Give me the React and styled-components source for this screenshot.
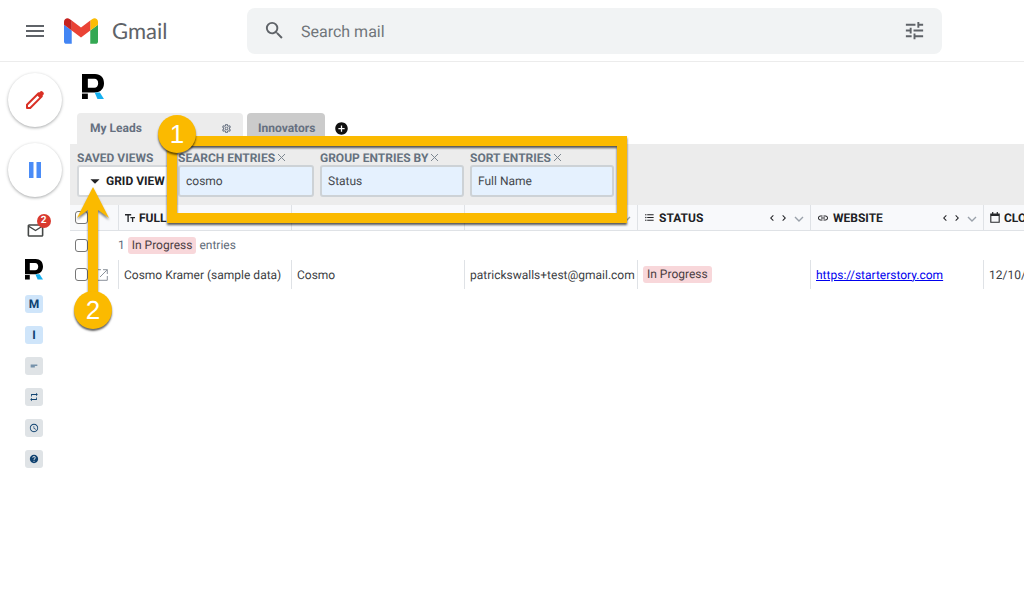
import React, { useState } from 'react';
import styled, { createGlobalStyle } from 'styled-components';
import {
  MdAccessTime,
  MdAddCircle,
  MdArrowDropDown,
  MdChevronLeft,
  MdChevronRight,
  MdFormatListBulleted,
  MdHelp,
  MdLink,
  MdMailOutline,
  MdMenu,
  MdOutlineSettings,
  MdRepeat,
  MdSearch,
  MdShortText,
  MdTune,
} from 'react-icons/md';

const columns = [
  { name: 'FULL NAME', icon: 'text' },
  { name: 'FIRST', icon: 'text' },
  { name: 'EMAIL', icon: 'text' },
  { name: 'STATUS', icon: 'list' },
  { name: 'WEBSITE', icon: 'link' },
  { name: 'CLOSE', icon: 'date' },
];

function BrandLogo({ width }) {
  return (
    <svg width={width} viewBox="0 0 64 73" role="img" aria-label="R">
      <path
        fill="#000"
        fillRule="evenodd"
        d="M0 0H38C54 0 64 10 64 27C64 43 54 53 38 54H0ZM17 14V40H36C43 40 47 35 47 27C47 19 43 14 36 14Z"
      />
      <path fill="#000" d="M0 57H17V73H0Z" />
      <path fill="#15b0f0" d="M37 54H52L64 73H45Z" />
    </svg>
  );
}

function GmailLogo() {
  return (
    <svg width="34" height="26" viewBox="52 42 88 66" aria-hidden="true">
      <path fill="#4285f4" d="M58 108h14V74L52 59v43c0 3.32 2.69 6 6 6" />
      <path fill="#34a853" d="M120 108h14c3.32 0 6-2.69 6-6V59l-20 15" />
      <path fill="#fbbc04" d="M120 48v26l20-15v-8c0-7.42-8.47-11.65-14.4-7.2" />
      <path fill="#ea4335" d="M72 74V48l24 18 24-18v26L96 92" />
      <path fill="#c5221f" d="M52 51v8l20 15V48l-5.6-4.2c-5.94-4.45-14.4-.22-14.4 7.2" />
    </svg>
  );
}

function PencilIcon() {
  return (
    <svg width="20" height="20" viewBox="0 0 20 20" fill="none" aria-hidden="true">
      <path
        d="M2 18V14.8L13.6 3.2L16.8 6.4L5.2 18Z"
        stroke="#d93025"
        strokeWidth="2"
        strokeLinejoin="round"
      />
      <path
        d="M11.8 5L15 1.8C15.9.9 16.9.9 17.7 1.7L18.3 2.3C19.1 3.1 19.1 4.1 18.2 5L15 8.2Z"
        fill="#d93025"
      />
    </svg>
  );
}

function OpenIcon() {
  return (
    <svg width="12" height="12" viewBox="0 0 12 12" fill="none" stroke="#8b929b" aria-hidden="true">
      <path d="M5 .7H.7V11.3H11.3V7M7 .7H11.3V5M11.3.7L4 8" />
    </svg>
  );
}

function CloseIcon() {
  return (
    <svg width="9" height="9" viewBox="0 0 9 9" fill="none" stroke="#7d8790" aria-hidden="true">
      <path d="M1 1L8 8M8 1L1 8" />
    </svg>
  );
}

function TextTypeIcon() {
  return (
    <svg width="10" height="10" viewBox="0 0 10 10" fill="none" stroke="#26282c" aria-hidden="true">
      <path strokeWidth="1.4" d="M0 1.7H6.2M3.1 1.7V9" />
      <path strokeWidth="1.3" d="M5.4 4.6H10M7.6 4.6V9" />
    </svg>
  );
}

function DateIcon() {
  return (
    <svg width="10" height="11" viewBox="0 0 10 11" fill="none" stroke="#26282c" aria-hidden="true">
      <path d="M.8 2H9.2V10.2H.8Z" strokeWidth="1.1" />
      <path d="M.8 3H9.2" strokeWidth="2" />
      <path d="M2.7 0V2M7.3 0V2" strokeWidth="1.2" />
    </svg>
  );
}

function ColumnIcon({ type }) {
  if (type === 'list') return <MdFormatListBulleted size={11} />;
  if (type === 'link') return <MdLink size={12} />;
  if (type === 'date') return <DateIcon />;
  return <TextTypeIcon />;
}

function App() {
  const [search, setSearch] = useState('cosmo');
  const [group, setGroup] = useState('Status');
  const [sort, setSort] = useState('Full Name');

  return (
    <>
      <GlobalStyle />
      <Header>
        <HeaderBrand>
          <IconButton aria-label="Main menu">
            <MdMenu size={24} />
          </IconButton>
          <GmailLogo />
          <span>Gmail</span>
        </HeaderBrand>
        <MailSearch>
          <IconButton aria-label="Search">
            <MdSearch size={23} />
          </IconButton>
          <input type="text" placeholder="Search mail" aria-label="Search mail" />
          <IconButton aria-label="Search options">
            <MdTune size={23} />
          </IconButton>
        </MailSearch>
      </Header>
      <Body>
        <Sidebar>
          <RoundButton aria-label="Compose">
            <PencilIcon />
          </RoundButton>
          <RoundButton aria-label="Pause inbox">
            <svg width="14" height="16" viewBox="0 0 14 16" fill="#4a8cf7" aria-hidden="true">
              <path d="M1 0H5.5V16H1ZM8.5 0H13V16H8.5Z" />
            </svg>
          </RoundButton>
          <Inbox href="#inbox" aria-label="Inbox">
            <MdMailOutline size={19} />
            <Badge>2</Badge>
          </Inbox>
          <Shortcuts>
            <BrandLogo width={18} />
            <Shortcut $box>M</Shortcut>
            <Shortcut $box>I</Shortcut>
            <Shortcut aria-label="Snippets">
              <MdShortText size={10} />
            </Shortcut>
            <Shortcut aria-label="Sequences">
              <MdRepeat size={10} />
            </Shortcut>
            <Shortcut aria-label="Reminders">
              <MdAccessTime size={10} />
            </Shortcut>
            <Shortcut aria-label="Help">
              <MdHelp size={10} />
            </Shortcut>
          </Shortcuts>
        </Sidebar>
        <Main>
          <BrandBar>
            <BrandLogo width={22} />
          </BrandBar>
          <Tabs>
            <Tab $active>
              My Leads
              <MdOutlineSettings size={11} stroke="currentColor" />
            </Tab>
            <Tab>Innovators</Tab>
            <AddButton aria-label="Add box">
              <MdAddCircle size={15} />
            </AddButton>
          </Tabs>
          <Toolbar>
            <Field $width={95}>
              <FieldLabel>
                <span id="views">SAVED VIEWS</span>
              </FieldLabel>
              <ViewButton aria-describedby="views">
                <MdArrowDropDown size={22} />
                GRID VIEW
              </ViewButton>
            </Field>
            <Field $width={136}>
              <FieldLabel>
                <label htmlFor="search">SEARCH ENTRIES</label>
                <button aria-label="Clear search" onClick={() => setSearch('')}>
                  <CloseIcon />
                </button>
              </FieldLabel>
              <input id="search" value={search} onChange={(e) => setSearch(e.target.value)} />
            </Field>
            <Field $width={144}>
              <FieldLabel>
                <label htmlFor="group">GROUP ENTRIES BY</label>
                <button aria-label="Clear grouping">
                  <CloseIcon />
                </button>
              </FieldLabel>
              <select id="group" value={group} onChange={(e) => setGroup(e.target.value)}>
                <option>Status</option>
              </select>
            </Field>
            <Field $width={144}>
              <FieldLabel>
                <label htmlFor="sort">SORT ENTRIES</label>
                <button aria-label="Clear sorting">
                  <CloseIcon />
                </button>
              </FieldLabel>
              <select id="sort" value={sort} onChange={(e) => setSort(e.target.value)}>
                <option>Full Name</option>
              </select>
            </Field>
          </Toolbar>
          <TableWrap>
            <Table>
              <colgroup>
                <col className="tools" />
                {columns.map((column) => (
                  <col key={column.name} />
                ))}
              </colgroup>
              <thead>
                <tr>
                  <td>
                    <Checkbox aria-label="Select all" />
                  </td>
                  {columns.map((column) => (
                    <th key={column.name}>
                      <HeadCell>
                        <ColumnIcon type={column.icon} />
                        <span>{column.name}</span>
                        <MdChevronLeft size={12} />
                        <MdChevronRight size={12} />
                        <svg width="10" height="10" viewBox="0 0 10 10" fill="none" stroke="#9aa1aa">
                          <path strokeWidth="1.4" d="M1 4L5 8L9 4" />
                        </svg>
                      </HeadCell>
                    </th>
                  ))}
                </tr>
              </thead>
              <tbody>
                <GroupRow>
                  <td>
                    <Checkbox aria-label="Select group" />
                  </td>
                  <td colSpan={columns.length}>
                    1 <Pill>In Progress</Pill> entries
                  </td>
                </GroupRow>
                <tr>
                  <td>
                    <RowTools>
                      <Checkbox aria-label="Select Cosmo Kramer" />
                      <OpenIcon />
                    </RowTools>
                  </td>
                  <td>Cosmo Kramer (sample data)</td>
                  <td>Cosmo</td>
                  <td>patrickswalls+test@gmail.com</td>
                  <td>
                    <Pill>In Progress</Pill>
                  </td>
                  <td>
                    <a href="https://starterstory.com">https://starterstory.com</a>
                  </td>
                  <td>12/10/20</td>
                </tr>
              </tbody>
            </Table>
          </TableWrap>
          <Highlight />
          <Arrow width="40" height="120" viewBox="0 0 40 120" aria-hidden="true">
            <path d="M20 1L36 32L25 24V110H15V24L4 32Z" fill="#fbba00" />
          </Arrow>
          <Step $left={88} $top={53}>
            1
          </Step>
          <Step $left={4} $top={229}>
            2
          </Step>
        </Main>
      </Body>
    </>
  );
}

const GlobalStyle = createGlobalStyle`
  * {
    box-sizing: border-box;
  }
  body {
    margin: 0;
    background: #fff;
    color: #3c4043;
    font-family: Roboto, 'Liberation Sans', sans-serif;
    font-size: 12px;
    text-rendering: geometricPrecision;
  }
  button,
  input,
  select {
    font: inherit;
    color: inherit;
    margin: 0;
    text-rendering: inherit;
  }
  button {
    padding: 0;
    border: none;
    background: none;
    cursor: pointer;
  }
  svg {
    display: block;
    flex-shrink: 0;
  }
`;

const Header = styled.header`
  display: flex;
  align-items: center;
  height: 62px;
  padding-right: 82px;
  border-bottom: 1px solid #ececec;
`;

const HeaderBrand = styled.div`
  display: flex;
  align-items: center;
  width: 247px;
  flex-shrink: 0;
  padding-left: 23px;
  font-family: Lato, sans-serif;
  font-size: 22px;
  color: #5f6368;
  button {
    margin-right: 17px;
  }
  span {
    margin-left: 14px;
  }
`;

const IconButton = styled.button`
  color: #5f6368;
`;

const MailSearch = styled.div`
  display: flex;
  align-items: center;
  flex: 1;
  height: 46px;
  padding: 0 16px;
  border-radius: 8px;
  background: #f1f3f4;
  input {
    flex: 1;
    min-width: 0;
    padding: 1px 15px 0;
    border: none;
    outline: none;
    background: none;
    font-size: 16px;
    color: #70757a;
    &::placeholder {
      color: #70757a;
      opacity: 1;
    }
  }
`;

const Body = styled.div`
  display: flex;
`;

const Sidebar = styled.nav`
  display: flex;
  flex-direction: column;
  align-items: center;
  width: 70px;
  flex-shrink: 0;
  padding-top: 11px;
`;

const RoundButton = styled.button`
  display: flex;
  align-items: center;
  justify-content: center;
  width: 54px;
  height: 54px;
  margin-bottom: 16px;
  border-radius: 50%;
  background: #fff;
  box-shadow: 0 1px 3px rgba(60, 64, 67, 0.45);
`;

const Inbox = styled.a`
  position: relative;
  margin: 8px 0 19px;
  color: #444746;
`;

const Badge = styled.span`
  position: absolute;
  top: -7px;
  right: -6px;
  width: 14px;
  height: 14px;
  border-radius: 50%;
  background: #d93a2f;
  color: #fff;
  font-size: 10px;
  font-weight: 700;
  line-height: 14px;
  text-align: center;
`;

const Shortcuts = styled.div`
  display: flex;
  flex-direction: column;
  gap: 13px;
  padding-right: 2px;
  > svg {
    margin-bottom: 2px;
  }
`;

const Shortcut = styled.button`
  display: flex;
  align-items: center;
  justify-content: center;
  width: 18px;
  height: 18px;
  border-radius: 3px;
  background: ${(props) => (props.$box ? '#cfe5fa' : '#dfe3e6')};
  color: #0f4270;
  font-size: 12px;
  font-weight: 700;
`;

const Main = styled.main`
  position: relative;
  flex: 1;
  min-width: 0;
`;

const BrandBar = styled.div`
  padding: 12px 12px 14px;
`;

const Tabs = styled.div`
  display: flex;
  gap: 4px;
  height: 31px;
  padding-left: 7px;
`;

const Tab = styled.button`
  display: flex;
  align-items: center;
  justify-content: space-between;
  width: ${(props) => (props.$active ? '166px' : '78px')};
  padding: ${(props) => (props.$active ? '0 11px 1px 13px' : '0 11px 1px')};
  border-radius: 4px 4px 0 0;
  background: ${(props) => (props.$active ? '#ececec' : '#cbcbcb')};
  color: #667080;
  font-weight: 700;
`;

const AddButton = styled.button`
  margin-left: 5px;
  color: #111;
`;

const Toolbar = styled.div`
  display: flex;
  gap: 6px;
  height: 61px;
  padding: 6px 7px;
  background: #ececec;
`;

const Field = styled.div`
  display: flex;
  flex-direction: column;
  width: ${(props) => props.$width}px;
  input,
  select {
    width: 100%;
    height: 32px;
    padding: 0 6px 1px;
    border: 2px solid #cdd2d6;
    border-radius: 3px;
    outline: none;
    appearance: none;
    background: #e5f1fe;
    color: #44484d;
  }
`;

const FieldLabel = styled.div`
  display: flex;
  align-items: center;
  gap: 2px;
  height: 15px;
  color: #66727f;
  font-weight: 700;
  white-space: nowrap;
`;

const ViewButton = styled.button`
  display: flex;
  align-items: center;
  height: 32px;
  padding: 0 0 1px 5px;
  border: 2px solid #d5d8db;
  border-radius: 3px;
  background: #fff;
  color: #202124;
  font-weight: 700;
  white-space: nowrap;
`;

const TableWrap = styled.div`
  overflow: hidden;
`;

const Table = styled.table`
  width: 1086px;
  table-layout: fixed;
  border-collapse: separate;
  border-spacing: 0;
  col {
    width: 173px;
  }
  col.tools {
    width: 48px;
  }
  th,
  td {
    height: 29px;
    padding: 0 5px;
    text-align: left;
    white-space: nowrap;
  }
  tbody td + td {
    border-left: 1px solid #dfe2e6;
  }
  thead td,
  thead th {
    height: 26px;
    border-bottom: 1px solid #dfe2e6;
    background: #f8f9fb;
  }
  th {
    border-left: 1px solid #dfe2e6;
    color: #202124;
    font-weight: 700;
  }
  a {
    color: #0000ee;
  }
`;

const GroupRow = styled.tr`
  td + td {
    padding: 0;
    border-left: none !important;
    color: #5f6b78;
  }
`;

const HeadCell = styled.div`
  display: flex;
  align-items: center;
  padding: 0 1px;
  span {
    flex: 1;
    margin-left: 4px;
  }
  svg:last-child {
    margin-left: 4px;
  }
`;

const RowTools = styled.div`
  display: flex;
  align-items: center;
  gap: 8px;
`;

const Checkbox = styled.input.attrs({ type: 'checkbox' })`
  display: block;
  width: 13px;
  height: 13px;
  border: 1px solid #767676;
  border-radius: 3px;
  appearance: none;
  background: #fff;
`;

const Pill = styled.span`
  display: inline-block;
  padding: 0 4px;
  border-radius: 3px;
  background: #f8d7da;
  color: #4a3d42;
  line-height: 17px;
`;

// tutorial callouts drawn over the grid
const Highlight = styled.div`
  position: absolute;
  left: 97px;
  top: 74px;
  width: 460px;
  height: 87px;
  border: 10px solid #fbba00;
  filter: drop-shadow(0 2px 1px rgba(0, 0, 0, 0.65));
  pointer-events: none;
`;

const Arrow = styled.svg`
  position: absolute;
  left: 3px;
  top: 124px;
  filter: drop-shadow(0 2px 1px rgba(0, 0, 0, 0.5));
  pointer-events: none;
`;

const Step = styled.div`
  position: absolute;
  left: ${(props) => props.$left}px;
  top: ${(props) => props.$top}px;
  width: 38px;
  height: 38px;
  border-radius: 50%;
  background: #fbba00;
  box-shadow: 0 2px 2px rgba(0, 0, 0, 0.6);
  color: #fff;
  font-family: 'Liberation Sans', sans-serif;
  font-size: 26px;
  line-height: 38px;
  text-align: center;
`;

export default App;
